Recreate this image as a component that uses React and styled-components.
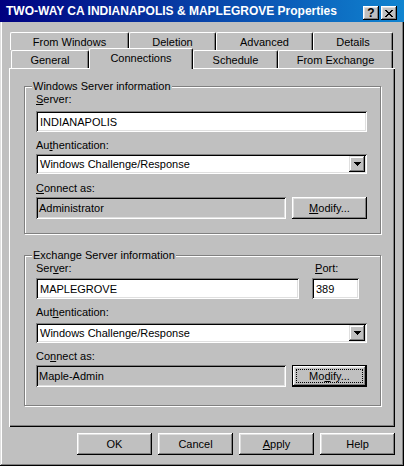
import styled, { createGlobalStyle } from 'styled-components';

const GlobalStyle = createGlobalStyle`
  html, body {
    margin: 0;
    padding: 0;
    background: #c0c0c0;
  }
  body {
    font-family: "Liberation Sans", Arial, sans-serif;
    font-size: 11px;
    color: #000;
  }
`;

const Window = styled.div`
  width: 404px;
  height: 466px;
  box-sizing: border-box;
  background: #c0c0c0;
  box-shadow: inset -1px -1px #000, inset 1px 1px #dfdfdf, inset -2px -2px #808080, inset 2px 2px #fff;
  display: flex;
  flex-direction: column;
`;

const TitleBar = styled.div`
  height: 22px;
  display: flex;
  align-items: center;
  padding: 0 7px 0 6px;
  background: linear-gradient(90deg, #000080 0%, #1084d0 100%);
`;

const TitleText = styled.div`
  flex: 1;
  color: #fff;
  font-weight: bold;
  font-size: 12px;
  white-space: nowrap;
`;

const TitleButton = styled.div`
  width: 16px;
  height: 14px;
  box-sizing: border-box;
  margin-top: 4px;
  margin-left: ${p => p.$ml || 0}px;
  background: #c0c0c0;
  box-shadow: inset -1px -1px #000, inset 1px 1px #fff, inset -2px -2px #808080, inset 2px 2px #dfdfdf;
  display: flex;
  align-items: center;
  justify-content: center;
  font-weight: bold;
  font-size: 12px;
  line-height: 12px;
`;

const TabStrip = styled.div`
  margin-top: 10px;
  display: flex;
  flex-direction: column;
`;

const TabRow = styled.div`
  display: flex;
  align-items: flex-end;
  height: 18px;
  padding-left: ${p => p.$indent}px;
`;

const Tab = styled.div`
  box-sizing: border-box;
  width: ${p => p.$w}px;
  height: ${p => (p.$active ? 21 : 18)}px;
  margin-bottom: ${p => (p.$active ? -1 : 0)}px;
  padding-bottom: ${p => (p.$active ? 3 : 0)}px;
  position: ${p => (p.$active ? 'relative' : 'static')};
  z-index: ${p => (p.$active ? 1 : 'auto')};
  display: flex;
  align-items: center;
  justify-content: center;
  background: #c0c0c0;
  border-top: 1px solid #fff;
  border-left: 1px solid #fff;
  border-right: 1px solid #000;
  border-radius: 2px 2px 0 0;
  box-shadow: inset -1px 0 #808080;
  white-space: nowrap;
`;

const Panel = styled.div`
  margin-left: 9px;
  width: 386px;
  height: 359px;
  box-sizing: border-box;
  padding-top: 12px;
  background: #c0c0c0;
  box-shadow: inset 1px 1px #fff, inset -1px -1px #000, inset -2px -2px #808080;
  display: flex;
  flex-direction: column;
`;

const Group = styled.fieldset`
  margin: ${p => p.$mt || 0}px 0 0 15px;
  width: 357px;
  box-sizing: border-box;
  padding: 0 13px ${p => p.$pb}px 11px;
  border: 1px solid #808080;
  box-shadow: inset 1px 1px #fff, 1px 1px #fff;
  min-width: 0;
`;

const Legend = styled.legend`
  margin-left: -4px;
  padding: 0 1px;
  line-height: 13px;
  background: #c0c0c0;
`;

const Label = styled.div`
  line-height: 13px;
  height: 13px;
  margin-top: ${p => p.$mt || 0}px;
  white-space: nowrap;
`;

const TextBox = styled.div`
  box-sizing: border-box;
  height: ${p => p.$h || 21}px;
  width: ${p => (p.$w ? `${p.$w}px` : 'auto')};
  flex: ${p => (p.$w ? 'none' : 1)};
  margin-top: ${p => p.$mt || 0}px;
  padding-left: ${p => p.$pl || 4}px;
  display: flex;
  align-items: center;
  background: ${p => (p.$disabled ? '#c0c0c0' : '#fff')};
  box-shadow: inset 1px 1px #808080, inset -1px -1px #fff, inset 2px 2px #000, inset -2px -2px #dfdfdf;
  white-space: nowrap;
`;

const Select = styled.div`
  box-sizing: border-box;
  height: 20px;
  margin-top: ${p => p.$mt || 0}px;
  padding: 2px 2px 2px 4px;
  display: flex;
  align-items: center;
  background: #fff;
  box-shadow: inset 1px 1px #808080, inset -1px -1px #fff, inset 2px 2px #000, inset -2px -2px #dfdfdf;
`;

const SelectText = styled.div`
  flex: 1;
  white-space: nowrap;
`;

const DropButton = styled.div`
  width: 16px;
  height: 16px;
  box-sizing: border-box;
  background: #c0c0c0;
  box-shadow: inset -1px -1px #000, inset 1px 1px #dfdfdf, inset -2px -2px #808080, inset 2px 2px #fff;
  display: flex;
  align-items: center;
  justify-content: center;
`;

const FieldRow = styled.div`
  display: flex;
  gap: ${p => p.$gap || 6}px;
  margin-top: ${p => p.$mt || 0}px;
`;

const ServerGrid = styled.div`
  display: grid;
  grid-template-columns: 263px 47px;
  column-gap: 13px;
  row-gap: 3px;
`;

const Button = styled.div`
  width: 75px;
  height: 22px;
  box-sizing: border-box;
  display: flex;
  align-items: center;
  justify-content: center;
  background: #c0c0c0;
  border: ${p => (p.$focused ? '1px solid #000' : 'none')};
  box-shadow: inset -1px -1px #000, inset 1px 1px #fff, inset -2px -2px #808080, inset 2px 2px #dfdfdf;
  outline: ${p => (p.$focused ? '1px dotted #000' : 'none')};
  outline-offset: -5px;
  flex: none;
`;

const ButtonBar = styled.div`
  display: flex;
  justify-content: flex-end;
  gap: 6px;
  margin-top: 6px;
  padding-right: 9px;
`;

function CloseGlyph() {
  const cells = [
    [0, 0], [1, 0], [6, 0], [7, 0],
    [1, 1], [2, 1], [5, 1], [6, 1],
    [2, 2], [3, 2], [4, 2], [5, 2],
    [3, 3], [4, 3],
    [2, 4], [3, 4], [4, 4], [5, 4],
    [1, 5], [2, 5], [5, 5], [6, 5],
    [0, 6], [1, 6], [6, 6], [7, 6],
  ];
  return (
    <svg width="8" height="7" viewBox="0 0 8 7" shapeRendering="crispEdges">
      {cells.map(([x, y]) => (
        <rect key={`${x}-${y}`} x={x} y={y} width="1" height="1" fill="#000" />
      ))}
    </svg>
  );
}

function DownArrow() {
  return (
    <svg width="7" height="4" viewBox="0 0 7 4" shapeRendering="crispEdges">
      <path d="M0 0h7v1H0zM1 1h5v1H1zM2 2h3v1H2zM3 3h1v1H3z" fill="#000" />
    </svg>
  );
}

const backTabs = [
  { name: 'From Windows', w: 119 },
  { name: 'Deletion', w: 87 },
  { name: 'Advanced', w: 97 },
  { name: 'Details', w: 80 },
];

const frontTabs = [
  { name: 'General', w: 78 },
  { name: 'Connections', w: 104, active: true },
  { name: 'Schedule', w: 85 },
  { name: 'From Exchange', w: 115 },
];

export default function App() {
  return (
    <>
      <GlobalStyle />
      <Window>
        <TitleBar>
          <TitleText>TWO-WAY CA INDIANAPOLIS &amp; MAPLEGROVE Properties</TitleText>
          <TitleButton>?</TitleButton>
          <TitleButton $ml={2}><CloseGlyph /></TitleButton>
        </TitleBar>

        <TabStrip>
          <TabRow $indent={10}>
            {backTabs.map(t => (
              <Tab key={t.name} $w={t.w}>{t.name}</Tab>
            ))}
          </TabRow>
          <TabRow $indent={11}>
            {frontTabs.map(t => (
              <Tab key={t.name} $w={t.w} $active={t.active}>{t.name}</Tab>
            ))}
          </TabRow>
        </TabStrip>

        <Panel>
          <Group $pb={14}>
            <Legend>Windows Server information</Legend>
            <Label><u>S</u>erver:</Label>
            <TextBox $mt={5}>INDIANAPOLIS</TextBox>
            <Label $mt={7}>Au<u>t</u>hentication:</Label>
            <Select $mt={2}>
              <SelectText>Windows Challenge/Response</SelectText>
              <DropButton><DownArrow /></DropButton>
            </Select>
            <Label $mt={8}><u>C</u>onnect as:</Label>
            <FieldRow $mt={2}>
              <TextBox $h={22} $disabled $pl={3}>Administrator</TextBox>
              <Button><span><u>M</u>odify...</span></Button>
            </FieldRow>
          </Group>

          <Group $mt={15} $pb={18}>
            <Legend>Exchange Server information</Legend>
            <ServerGrid>
              <Label>Ser<u>v</u>er:</Label>
              <Label>&nbsp;<u>P</u>ort:</Label>
              <TextBox>MAPLEGROVE</TextBox>
              <TextBox>389</TextBox>
            </ServerGrid>
            <Label $mt={7}>Aut<u>h</u>entication:</Label>
            <Select $mt={4}>
              <SelectText>Windows Challenge/Response</SelectText>
              <DropButton><DownArrow /></DropButton>
            </Select>
            <Label $mt={7}>Co<u>n</u>nect as:</Label>
            <FieldRow $mt={2}>
              <TextBox $h={22} $disabled $pl={3}>Maple-Admin</TextBox>
              <Button $focused><span>Mo<u>d</u>ify...</span></Button>
            </FieldRow>
          </Group>
        </Panel>

        <ButtonBar>
          <Button>OK</Button>
          <Button>Cancel</Button>
          <Button><span><u>A</u>pply</span></Button>
          <Button>Help</Button>
        </ButtonBar>
      </Window>
    </>
  );
}
